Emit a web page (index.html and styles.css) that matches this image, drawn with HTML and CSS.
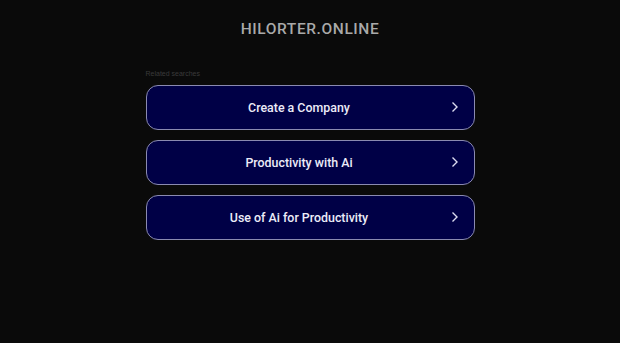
FILE: index.html
```html
<!DOCTYPE html>
<html>
<head>
<meta charset="utf-8">
<link rel="stylesheet" href="styles.css">
</head>
<body>
<header class="top">
  <h1 class="domain">HILORTER.ONLINE</h1>
</header>
<main class="wrap">
  <div class="label">Related searches</div>
  <div class="list">
    <a class="item" href="#"><span class="txt">Create a Company</span><svg class="chev" viewBox="0 0 8 12" width="8" height="12"><path d="M1.5 1.5 L6 6 L1.5 10.5" fill="none" stroke="#dcdcf0" stroke-width="1.4"/></svg></a>
    <a class="item" href="#"><span class="txt">Productivity with Ai</span><svg class="chev" viewBox="0 0 8 12" width="8" height="12"><path d="M1.5 1.5 L6 6 L1.5 10.5" fill="none" stroke="#dcdcf0" stroke-width="1.4"/></svg></a>
    <a class="item" href="#"><span class="txt">Use of Ai for Productivity</span><svg class="chev" viewBox="0 0 8 12" width="8" height="12"><path d="M1.5 1.5 L6 6 L1.5 10.5" fill="none" stroke="#dcdcf0" stroke-width="1.4"/></svg></a>
  </div>
</main>
</body>
</html>
```
FILE: styles.css
```css
html, body {
  margin: 0;
  padding: 0;
  background: #0a0a0a;
  font-family: "Liberation Sans", Arial, sans-serif;
}
.top {
  padding-top: 20px;
  text-align: center;
}
.domain {
  margin: 0;
  font-family: Roboto, "Liberation Sans", sans-serif;
  font-size: 15.5px;
  line-height: 19px;
  font-weight: 500;
  letter-spacing: 0.6px;
  color: #a9a9a9;
}
.wrap {
  width: 329px;
  margin: 0 auto;
  padding-top: 30px;
}
.label {
  font-size: 7px;
  line-height: 9px;
  color: #3a3a3a;
  margin-bottom: 7px;
}
.list {
  display: flex;
  flex-direction: column;
  gap: 10px;
}
.item {
  position: relative;
  display: flex;
  align-items: center;
  justify-content: center;
  height: 43px;
  padding-right: 22px;
  border: 1px solid #8a8ab0;
  border-radius: 12px;
  background: #000046;
  text-decoration: none;
  color: #ececf8;
}
.txt {
  font-family: Roboto, "Liberation Sans", sans-serif;
  font-size: 12.4px;
  font-weight: 500;
  letter-spacing: 0;
}
.chev {
  position: absolute;
  right: 15px;
  top: 15px;
}
```
